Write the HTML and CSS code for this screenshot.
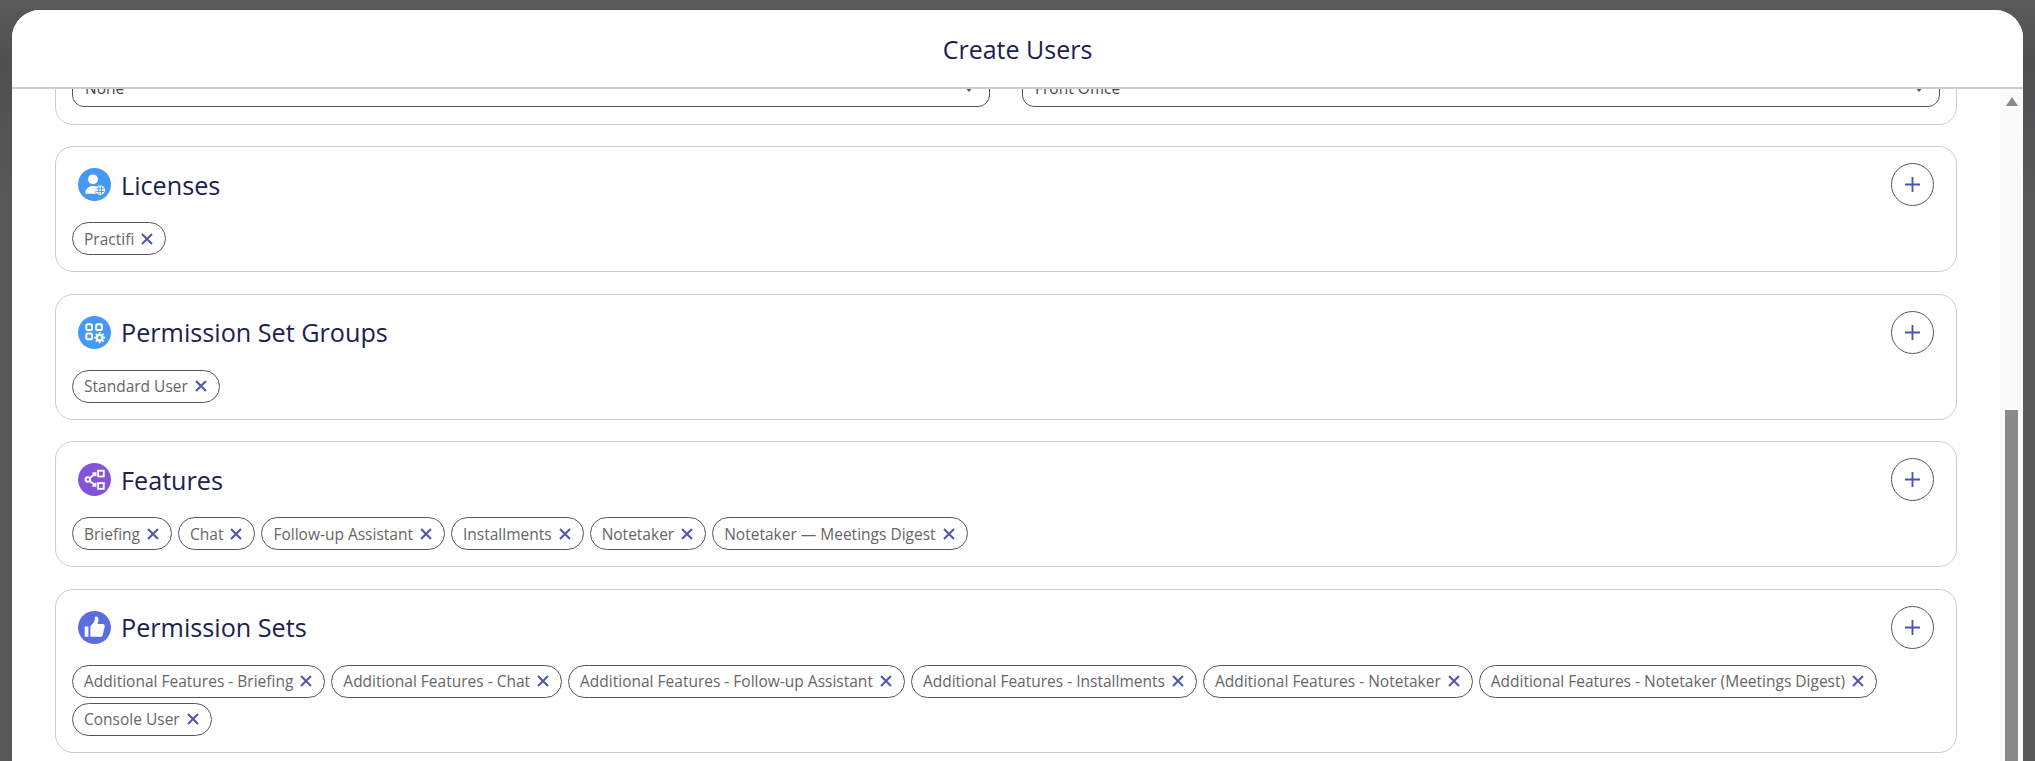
FILE: index.html
```html
<!DOCTYPE html>
<html>
  <head>
    <title>Create Users</title>
    <link rel="stylesheet" href="styles.css">
  </head>
  <body>
    <div class="modal">
      <div class="modal-header">Create Users</div>
      <div class="modal-body">
        <div class="content">
          <div class="card top-card">
            <div class="select-row">
              <div class="select">None<span class="caret"></span></div>
              <div class="select">Front Office<span class="caret"></span></div>
            </div>
          </div>

          <div class="card">
            <div class="card-head">
              <svg class="card-icon" viewBox="0 0 32 32">
                <circle cx="16" cy="16" r="16" fill="#4698f5"/>
                <circle cx="14.500" cy="11" r="4.800" fill="#fff"/>
                <path d="M7 25c0-4.500 3-7.500 7.500-7.500 1.600 0 3 .3 4 1-1.600 1.300-2.200 4-1.200 6.500z" fill="#fff"/>
                <circle cx="21.500" cy="21.500" r="4.600" fill="#fff"/>
                <path d="M17.800 20.200h7.400M17.800 22.800h7.400M20.200 17.800v7.400M22.800 17.800v7.400" stroke="#4698f5" stroke-width="0.9" fill="none"/>
              </svg>
              <h2>Licenses</h2>
              <div class="add-btn"><svg viewBox="0 0 18 18"><path d="M9 1v16M1 9h16"/></svg></div>
            </div>
            <div class="chips">
              <div class="chip">Practifi<svg viewBox="0 0 12 12"><path d="M1 1l10 10M11 1L1 11"/></svg></div>
            </div>
          </div>

          <div class="card">
            <div class="card-head">
              <svg class="card-icon" viewBox="0 0 32 32">
                <circle cx="16" cy="16" r="16" fill="#4698f5"/>
                <g fill="none" stroke="#fff" stroke-width="1.900">
                  <rect x="8" y="8" width="5.600" height="5.600" rx="1.600"/>
                  <rect x="17.600" y="8" width="5.600" height="5.600" rx="1.600"/>
                  <rect x="8" y="17" width="5.600" height="5.600" rx="1.600"/>
                  <circle cx="21" cy="21" r="2.800" stroke-width="2.400"/>
                  <path d="M21 15.600v1.600M21 24.800v1.600M15.600 21h1.600M24.800 21h1.600M17.200 17.200l1.100 1.100M23.700 23.700l1.100 1.100M17.200 24.800l1.100-1.100M23.700 18.300l1.100-1.100" stroke-width="1.600"/>
                </g>
              </svg>
              <h2>Permission Set Groups</h2>
              <div class="add-btn"><svg viewBox="0 0 18 18"><path d="M9 1v16M1 9h16"/></svg></div>
            </div>
            <div class="chips">
              <div class="chip">Standard User<svg viewBox="0 0 12 12"><path d="M1 1l10 10M11 1L1 11"/></svg></div>
            </div>
          </div>

          <div class="card">
            <div class="card-head">
              <svg class="card-icon" viewBox="0 0 32 32">
                <circle cx="16" cy="16" r="16" fill="#8454d8"/>
                <g fill="none" stroke="#fff" stroke-width="1.800">
                  <rect x="19.500" y="7.500" width="5.500" height="5.500"/>
                  <rect x="19.500" y="19.500" width="5.500" height="5.500"/>
                  <circle cx="9.500" cy="16" r="2.200"/>
                  <path d="M11.500 14.500l5-4M14 9.800h3v3M11.500 17.500l5 4M14 22.200h3v-3"/>
                </g>
              </svg>
              <h2>Features</h2>
              <div class="add-btn"><svg viewBox="0 0 18 18"><path d="M9 1v16M1 9h16"/></svg></div>
            </div>
            <div class="chips">
              <div class="chip">Briefing<svg viewBox="0 0 12 12"><path d="M1 1l10 10M11 1L1 11"/></svg></div>
              <div class="chip">Chat<svg viewBox="0 0 12 12"><path d="M1 1l10 10M11 1L1 11"/></svg></div>
              <div class="chip">Follow-up Assistant<svg viewBox="0 0 12 12"><path d="M1 1l10 10M11 1L1 11"/></svg></div>
              <div class="chip">Installments<svg viewBox="0 0 12 12"><path d="M1 1l10 10M11 1L1 11"/></svg></div>
              <div class="chip">Notetaker<svg viewBox="0 0 12 12"><path d="M1 1l10 10M11 1L1 11"/></svg></div>
              <div class="chip">Notetaker — Meetings Digest<svg viewBox="0 0 12 12"><path d="M1 1l10 10M11 1L1 11"/></svg></div>
            </div>
          </div>

          <div class="card">
            <div class="card-head">
              <svg class="card-icon" viewBox="0 0 32 32">
                <circle cx="16" cy="16" r="16" fill="#5b6ee1"/>
                <path d="M6.500 15h3.600v10H6.500zM12 15l3.600-4.600c.6-1 .8-2.600.8-4.400 0-1 2.800-.8 3.300 1 .4 1.700-.2 4-.8 5.500h5c1.600 0 2.300 1.200 2 2.600l-1.900 8.200c-.3 1.200-1.200 1.700-2.200 1.700H12z" fill="#fff"/>
              </svg>
              <h2>Permission Sets</h2>
              <div class="add-btn"><svg viewBox="0 0 18 18"><path d="M9 1v16M1 9h16"/></svg></div>
            </div>
            <div class="chips">
              <div class="chip">Additional Features - Briefing<svg viewBox="0 0 12 12"><path d="M1 1l10 10M11 1L1 11"/></svg></div>
              <div class="chip">Additional Features - Chat<svg viewBox="0 0 12 12"><path d="M1 1l10 10M11 1L1 11"/></svg></div>
              <div class="chip">Additional Features - Follow-up Assistant<svg viewBox="0 0 12 12"><path d="M1 1l10 10M11 1L1 11"/></svg></div>
              <div class="chip">Additional Features - Installments<svg viewBox="0 0 12 12"><path d="M1 1l10 10M11 1L1 11"/></svg></div>
              <div class="chip">Additional Features - Notetaker<svg viewBox="0 0 12 12"><path d="M1 1l10 10M11 1L1 11"/></svg></div>
              <div class="chip">Additional Features - Notetaker (Meetings Digest)<svg viewBox="0 0 12 12"><path d="M1 1l10 10M11 1L1 11"/></svg></div>
              <div class="chip">Console User<svg viewBox="0 0 12 12"><path d="M1 1l10 10M11 1L1 11"/></svg></div>
            </div>
          </div>
        </div>

        <div class="scrollbar">
          <div class="scroll-arrow"></div>
          <div class="scroll-thumb"></div>
        </div>
      </div>
    </div>
  </body>
</html>
```

FILE: styles.css
```css
html,
body {
  height: 100%;
  margin: 0;
  overflow: hidden;
}

body {
  background: linear-gradient(#5a5a5a, #505050 60px, #525254 110px, #585858 200px);
  padding: 10px 12px 0;
  box-sizing: border-box;
  font-family: "Open Sans", "Noto Sans", sans-serif;
}

.modal {
  display: flex;
  flex-direction: column;
  height: 100%;
  background-color: white;
  border-radius: 28px 28px 0 0;
  overflow: hidden;
}

.modal-header {
  flex: none;
  position: relative;
  z-index: 1;
  height: 77px;
  line-height: 79px;
  text-align: center;
  font-size: 25px;
  color: #1c2150;
  background-color: white;
  border-bottom: 2px solid #ccc;
}

.modal-body {
  flex: 1;
  display: flex;
  min-height: 0;
}

.content {
  flex: 1;
  display: flex;
  flex-direction: column;
  gap: 21.500px;
  padding: 0 43px;
  min-width: 0;
}

.card {
  flex: none;
  border: 1px solid #ccc;
  border-radius: 18px;
  padding: 16px 21px 16px 16px;
}

/* first card is scrolled under the header */
.top-card {
  margin-top: -21.500px;
  padding: 0 16px 17px;
}

.select-row {
  display: flex;
  gap: 32px;
}

.select {
  flex: 1;
  display: flex;
  justify-content: space-between;
  height: 36px;
  padding: 0 16px 0 12px;
  border: 1px solid #555;
  border-radius: 12px;
  font-size: 15.500px;
  line-height: 36px;
  color: #444;
}

.caret {
  width: 0;
  height: 0;
  margin-top: 17px;
  border-left: 4px solid transparent;
  border-right: 4px solid transparent;
  border-top: 5px solid #555;
}

.card-head {
  display: flex;
  align-items: center;
  height: 43px;
  margin-bottom: 16px;
}

.card-icon {
  width: 33px;
  height: 33px;
  margin: 0 10px 0 6px;
}

h2 {
  flex: 1;
  margin: 0;
  font-size: 25.200px;
  font-weight: normal;
  color: #1c2150;
}

.add-btn {
  display: flex;
  align-items: center;
  justify-content: center;
  width: 41px;
  height: 41px;
  margin-right: 1px;
  border: 1px solid #555;
  border-radius: 50%;
}

.add-btn svg {
  width: 17px;
  height: 17px;
  fill: none;
  stroke: #4f54b0;
  stroke-width: 2;
}

.chips {
  display: flex;
  flex-wrap: wrap;
  gap: 5px 6px;
}

.chip {
  display: flex;
  align-items: center;
  gap: 7px;
  height: 31px;
  padding: 0 12px 0 11px;
  border: 1px solid #555;
  border-radius: 17px;
  font-size: 15.500px;
  color: #666;
}

.chip svg {
  width: 12px;
  height: 12px;
  fill: none;
  stroke: #4f54b0;
  stroke-width: 2;
}

.scrollbar {
  flex: none;
  width: 23px;
  display: flex;
  flex-direction: column;
  align-items: flex-start;
  background-color: #fafafa;
}

.scroll-arrow {
  width: 0;
  height: 0;
  margin: 8px 0 0 6px;
  border-left: 6px solid transparent;
  border-right: 6px solid transparent;
  border-bottom: 9px solid #8a8a8a;
}

.scroll-thumb {
  width: 13px;
  margin: 304px 0 0 5px;
  flex: 1;
  background-color: #8a8a8a;
}
```
